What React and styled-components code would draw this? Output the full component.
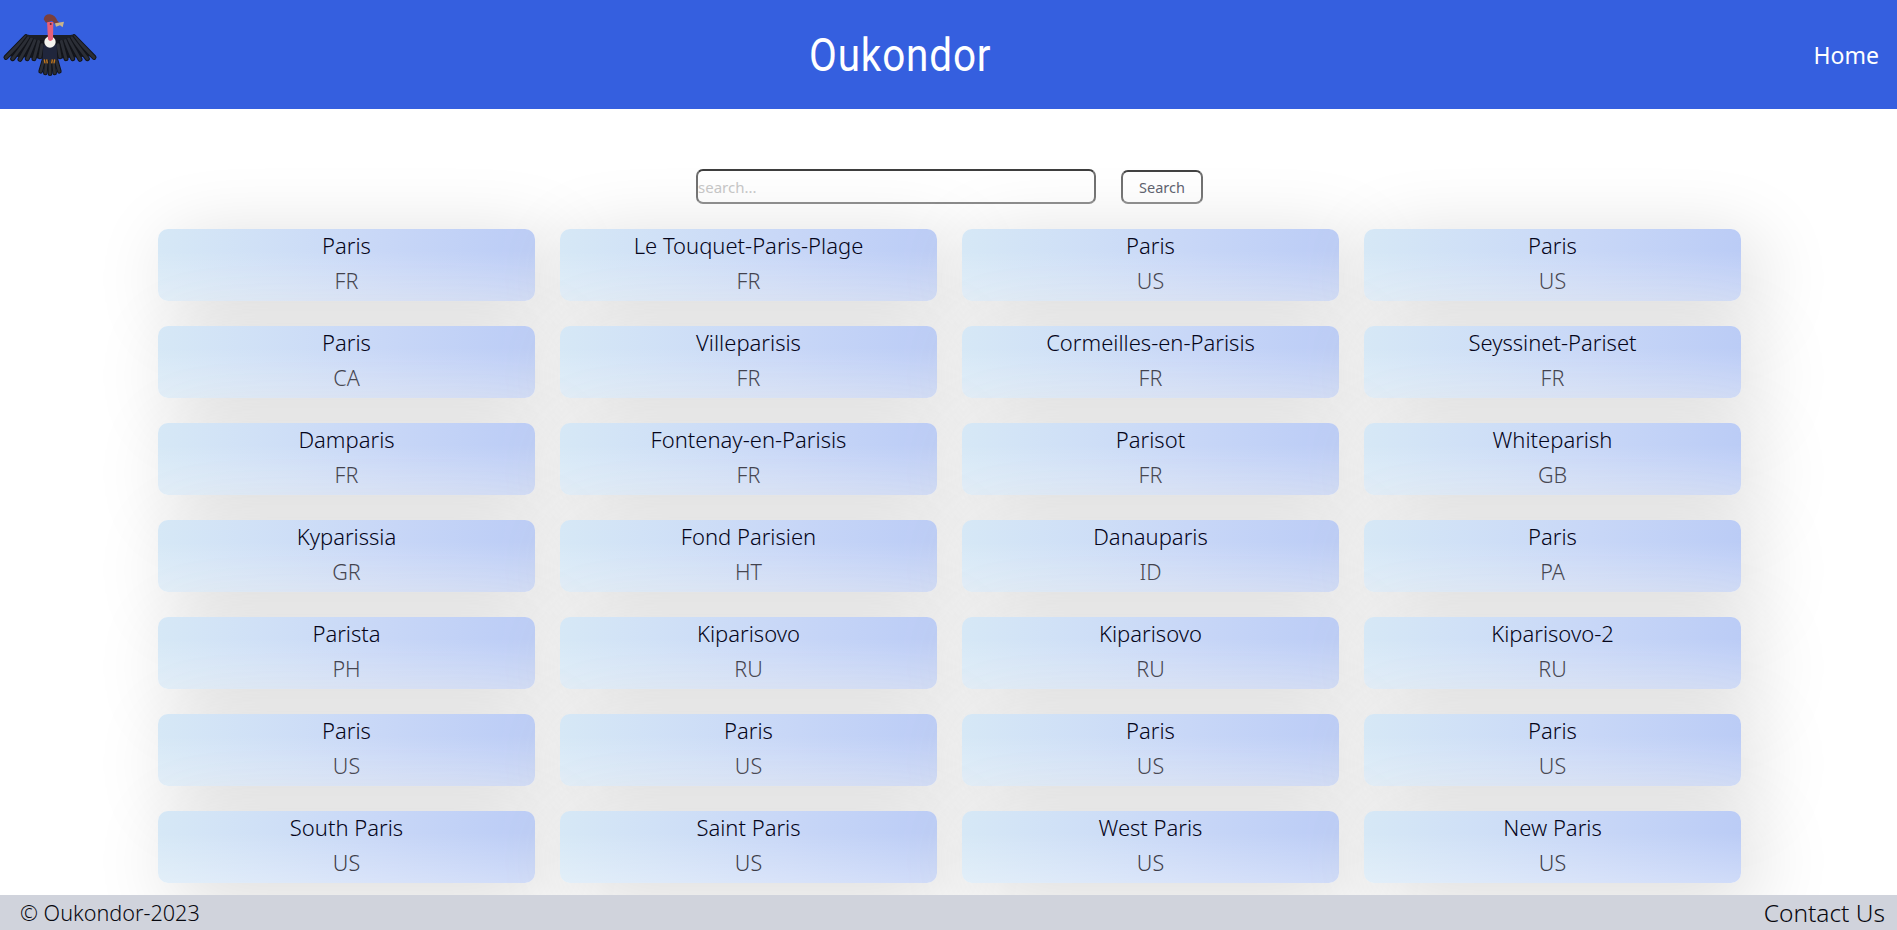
import React from "react";
import styled, { createGlobalStyle } from "styled-components";

const Global = createGlobalStyle`
  html, body { margin: 0; padding: 0; background: #fff; }
  body { font-family: "Noto Sans", "Open Sans", sans-serif; }
`;

const Page = styled.div`
  height: 100vh;
  display: flex;
  flex-direction: column;
  overflow: hidden;
`;

const Header = styled.header`
  flex: 0 0 109px;
  background: #355fdf;
  display: flex;
  align-items: center;
  color: #fff;
  padding-right: 18px;
`;

const Logo = styled.svg`
  flex: 0 0 100px;
  width: 100px;
  height: 90px;
  align-self: flex-start;
`;

const Title = styled.h1`
  margin: 0 0 0 709px;
  font-family: "Roboto", sans-serif;
  font-weight: 400;
  font-size: 47px;
  letter-spacing: 1px;
  transform: scaleX(0.86);
  transform-origin: left center;
`;

const HomeLink = styled.a`
  margin-left: auto;
  font-size: 23px;
  color: #fff;
`;

const Main = styled.main`
  flex: 1;
  min-height: 0;
  overflow: hidden;
  padding-top: 60px;
`;

const SearchForm = styled.form`
  display: flex;
  align-items: center;
  gap: 25px;
  height: 35px;
  margin: 0 0 25px 0;
  padding-left: 696px;
`;

const SearchInput = styled.input`
  box-sizing: border-box;
  width: 400px;
  height: 35px;
  padding: 0;
  border-width: 2px;
  border-style: solid;
  border-color: #3b3b3b #6a6a6a #808080 #6a6a6a;
  border-radius: 7px;
  font-family: inherit;
  font-size: 15px;
  background: transparent;
  &::placeholder { color: #c4c4c4; opacity: 1; }
`;

const SearchButton = styled.button`
  box-sizing: border-box;
  width: 82px;
  height: 34px;
  padding: 0;
  border-width: 2px;
  border-style: solid;
  border-color: #3f3f3f #6a6a6a #808080 #6a6a6a;
  border-radius: 7px;
  background: #fff;
  color: #555866;
  font-family: inherit;
  font-size: 14.5px;
`;

const Grid = styled.section`
  display: grid;
  grid-template-columns: repeat(4, 377px);
  grid-auto-rows: 72px;
  gap: 25px;
  padding-left: 158px;
`;

const Card = styled.article`
  border-radius: 10px;
  background:
    linear-gradient(to bottom, rgba(255, 255, 255, 0) 30%, rgba(255, 255, 255, 0.3) 100%),
    linear-gradient(to right, #d6e8f6 0%, #c8d7f7 60%, #bbccf6 100%);
  box-shadow: 14px 14px 80px #d6d6d6;
  text-align: center;
`;

const CityName = styled.div`
  font-size: 22px;
  font-weight: 350;
  line-height: 30px;
  padding-top: 1px;
  color: #05051a;
`;

const Country = styled.div`
  font-size: 21.5px;
  font-weight: 300;
  line-height: 30px;
  margin-top: 6px;
  color: #3c3c48;
`;

const Footer = styled.footer`
  flex: 0 0 35px;
  background: #d0d3dc;
  display: flex;
  justify-content: space-between;
  align-items: center;
  padding: 0 12px 0 20px;
  color: #08080f;
`;

const Copyright = styled.span`
  font-size: 21.6px;
  font-weight: 350;
`;

const ContactLink = styled.a`
  font-size: 24.5px;
  font-weight: 350;
`;

const cities = [
  ["Paris", "FR"], ["Le Touquet-Paris-Plage", "FR"], ["Paris", "US"], ["Paris", "US"],
  ["Paris", "CA"], ["Villeparisis", "FR"], ["Cormeilles-en-Parisis", "FR"], ["Seyssinet-Pariset", "FR"],
  ["Damparis", "FR"], ["Fontenay-en-Parisis", "FR"], ["Parisot", "FR"], ["Whiteparish", "GB"],
  ["Kyparissia", "GR"], ["Fond Parisien", "HT"], ["Danauparis", "ID"], ["Paris", "PA"],
  ["Parista", "PH"], ["Kiparisovo", "RU"], ["Kiparisovo", "RU"], ["Kiparisovo-2", "RU"],
  ["Paris", "US"], ["Paris", "US"], ["Paris", "US"], ["Paris", "US"],
  ["South Paris", "US"], ["Saint Paris", "US"], ["West Paris", "US"], ["New Paris", "US"],
];

const wingFeathers = [
  [78, 110, 18, 172], [86, 112, 38, 176], [96, 114, 60, 178],
  [106, 118, 82, 176], [116, 124, 102, 176], [126, 134, 120, 170],
];
const tailFeathers = [
  [132, 180, 122, 214], [140, 182, 136, 219], [150, 182, 150, 221],
  [160, 182, 164, 219], [168, 180, 178, 214],
];

function Feather({ x1, y1, x2, y2, width }) {
  return (
    <>
      <line x1={x1} y1={y1} x2={x2} y2={y2} stroke="#12141a" strokeWidth={width + 6} strokeLinecap="round" />
      <line x1={x1} y1={y1} x2={x2} y2={y2} stroke="#2b2e36" strokeWidth={width} strokeLinecap="round" />
    </>
  );
}

function VultureLogo() {
  return (
    <Logo viewBox="0 0 300 270" aria-hidden="true">
      <path d="M75 105 L225 105 L285 168 L150 178 L15 168 Z" fill="#14161d" />
      {wingFeathers.map(([x1, y1, x2, y2]) => (
        <React.Fragment key={x2}>
          <Feather x1={x1} y1={y1} x2={x2} y2={y2} width={9} />
          <Feather x1={300 - x1} y1={y1} x2={300 - x2} y2={y2} width={9} />
        </React.Fragment>
      ))}
      <path d="M75 105 L225 105 L190 120 L110 120 Z" fill="#1b1e26" />
      {tailFeathers.map(([x1, y1, x2, y2]) => (
        <Feather key={x2} x1={x1} y1={y1} x2={x2} y2={y2} width={8} />
      ))}
      <path d="M130 135 Q150 125 170 135 L172 180 L128 180 Z" fill="#20263c" />
      <path d="M133 178 L135 190 M140 178 L142 190 M157 178 L155 190 M164 178 L162 190" stroke="#c77a1e" strokeWidth="4" fill="none" />
      <ellipse cx="150" cy="126" rx="17" ry="17" fill="#f4f4ef" />
      <path d="M141 66 L160 66 L159 118 Q150 128 144 118 Z" fill="#e85f78" />
      <path d="M131 58 Q134 42 150 43 Q166 46 172 62 L178 68 L165 72 L156 62 L138 68 Z" fill="#7a3f3c" />
      <path d="M165 70 L192 65 L188 82 L180 76 L168 80 Z" fill="#c9b48a" />
      <circle cx="152" cy="72" r="3" fill="#5a2430" />
    </Logo>
  );
}

export default function App() {
  return (
    <Page>
      <Global />
      <Header>
        <VultureLogo />
        <Title>Oukondor</Title>
        <HomeLink>Home</HomeLink>
      </Header>
      <Main>
        <SearchForm>
          <SearchInput placeholder="search..." />
          <SearchButton type="button">Search</SearchButton>
        </SearchForm>
        <Grid>
          {cities.map(([name, country], i) => (
            <Card key={i}>
              <CityName>{name}</CityName>
              <Country>{country}</Country>
            </Card>
          ))}
        </Grid>
      </Main>
      <Footer>
        <Copyright>© Oukondor-2023</Copyright>
        <ContactLink>Contact Us</ContactLink>
      </Footer>
    </Page>
  );
}
